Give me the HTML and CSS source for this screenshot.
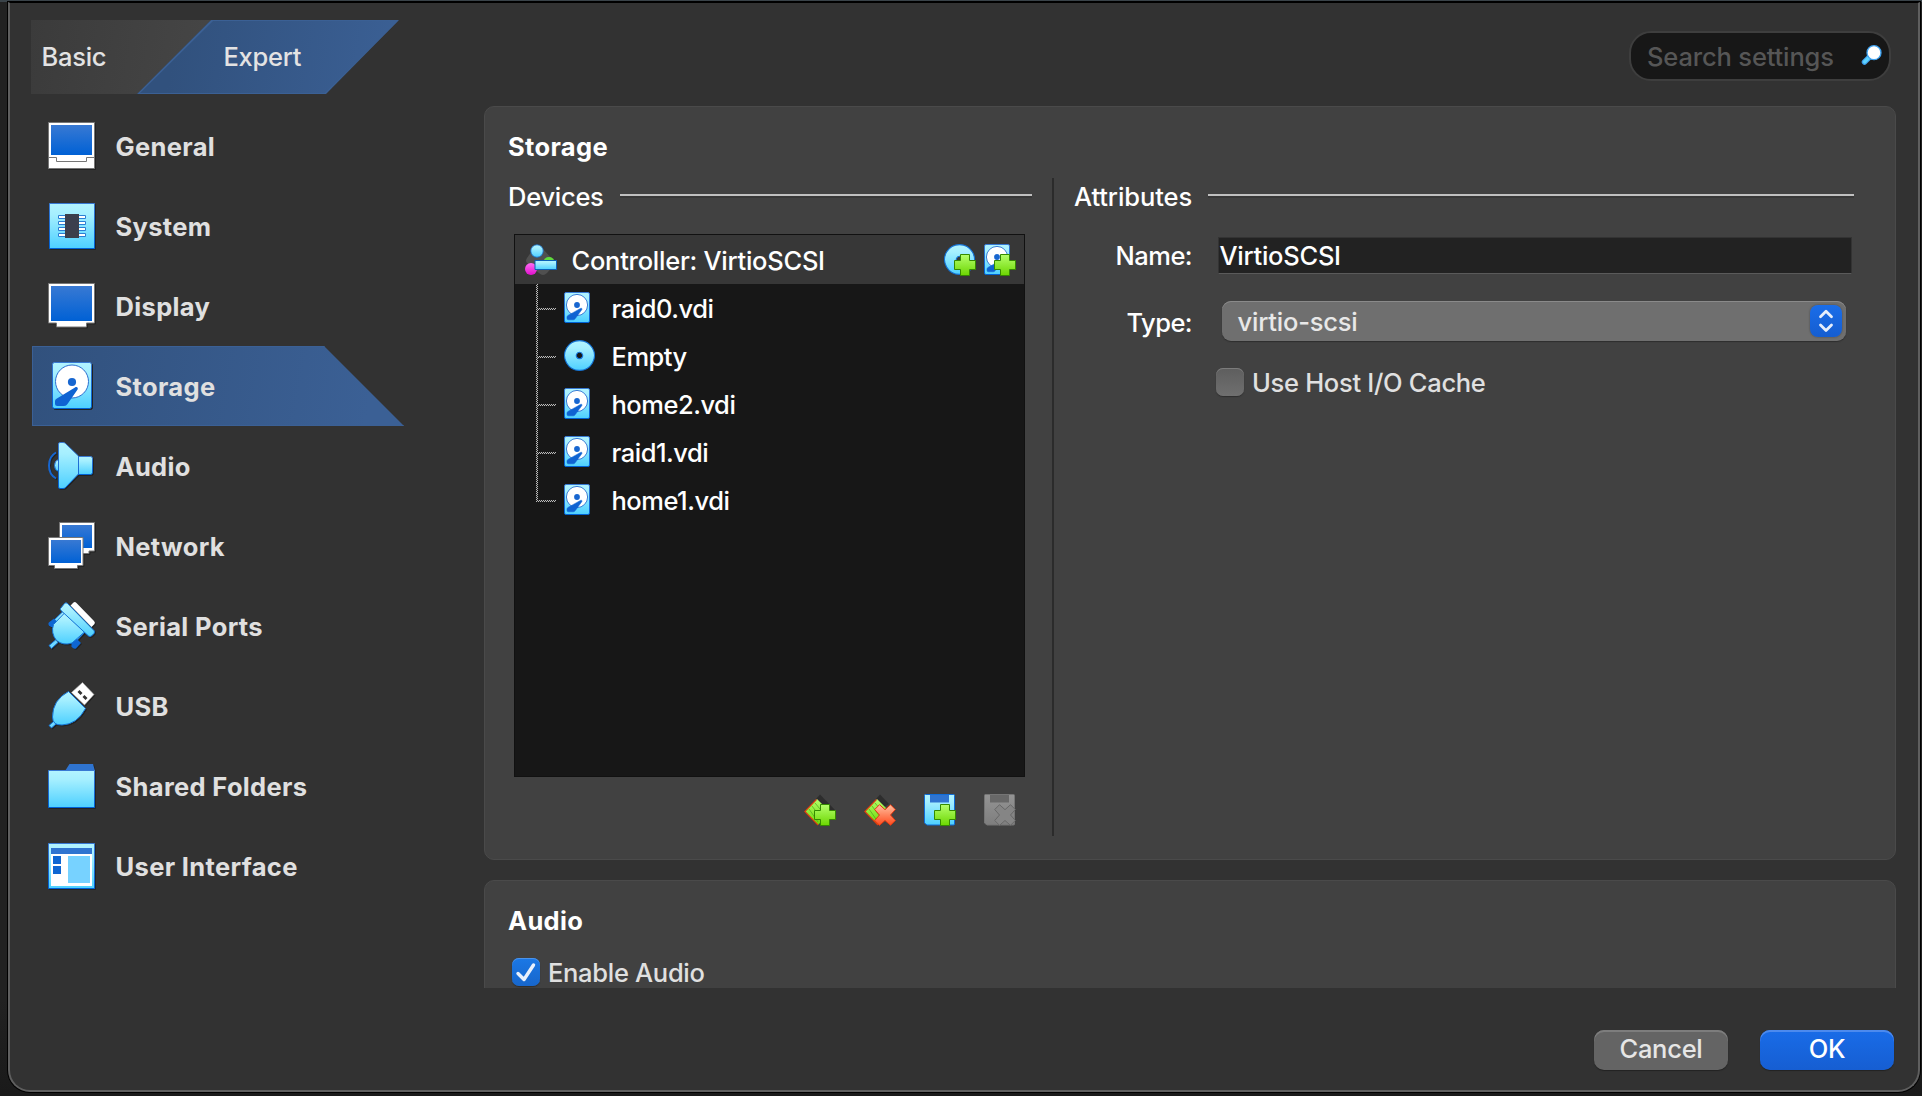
FILE: index.html
```html
<!DOCTYPE html>
<html lang="en">
<head>
<meta charset="utf-8">
<title>Settings</title>
<link rel="stylesheet" href="styles.css">
</head>
<body>
<svg class="defs" width="0" height="0" aria-hidden="true">
  <defs>
    <linearGradient id="sky" x1="0" y1="0" x2="0" y2="1"><stop offset="0" stop-color="#b3f4ff"/><stop offset=".25" stop-color="#a5efff"/><stop offset="1" stop-color="#4dd0ff"/></linearGradient>
    <linearGradient id="blue" x1="0" y1="0" x2="0" y2="1"><stop offset="0" stop-color="#3879d3"/><stop offset="1" stop-color="#0061d5"/></linearGradient>
    <linearGradient id="green" x1="0" y1="0" x2="0" y2="1"><stop offset="0" stop-color="#b4ff6c"/><stop offset="1" stop-color="#6cd600"/></linearGradient>
    <linearGradient id="red" x1="0" y1="0" x2="0" y2="1"><stop offset="0" stop-color="#ffc0a0"/><stop offset="1" stop-color="#ff4a1c"/></linearGradient>
    <linearGradient id="pink" x1="0" y1="0" x2="0" y2="1"><stop offset="0" stop-color="#ff6cf4"/><stop offset="1" stop-color="#e010cc"/></linearGradient>
    <linearGradient id="grey" x1="0" y1="0" x2="0" y2="1"><stop offset="0" stop-color="#949494"/><stop offset="1" stop-color="#7e7e7e"/></linearGradient>
    <symbol id="hd" viewBox="0 0 26 31">
      <rect x=".5" y=".5" width="25" height="30" rx="1.5" fill="url(#sky)" stroke="url(#blue)"/>
      <circle cx="13" cy="13" r="10.6" fill="#fff" stroke="#2a6fd0" stroke-width=".9"/>
      <circle cx="13" cy="13" r="2.9" fill="#1766d0"/>
      <path d="M16.5 16.4c.8-.6 1.8 0 1.400 1.200L11.3 26.6q-.9 1.200-2 1.200H4.600q-1.600 0-1.600-1.500V25q0-1 1-1.600z" fill="#0f63d2" stroke="#0f63d2" stroke-width=".5"/>
    </symbol>
    <symbol id="cd" viewBox="0 0 31 31">
      <path fill-rule="evenodd" d="M15.500 .6a14.900 14.900 0 1 0 .01 0zM15.500 12.300a3.200 3.200 0 1 1-.01 0z" fill="url(#sky)" stroke="#1372d6" stroke-width="1.100"/>
    </symbol>
    <symbol id="plus" viewBox="0 0 22 22"><path d="M6.500 .5h9v6h6v9h-6v6h-9v-6h-6v-9h6z" fill="url(#green)" stroke="#348a00"/></symbol>
    <symbol id="cross" viewBox="0 0 22 22"><path d="M5.500.7 11 5.700 16.500.7 21.300 5.500 16.500 11 21.300 16.500 16.500 21.300 11 16.500 5.500 21.300.7 16.500 5.500 11 .7 5.500z"/></symbol>
    <symbol id="floppy" viewBox="0 0 31 32"><path d="M2 .5H29.500a1 1 0 0 1 1 1V30a1 1 0 0 1-1 1H3L.5 29V1.500A1 1 0 0 1 2 .5z"/></symbol>
  </defs>
</svg>

<div class="window">
  <header class="top">
    <nav class="tabs">
      <div class="tab basic"><span class="t">Basic</span></div>
      <div class="tab expert"><span class="t">Expert</span></div>
    </nav>
    <div class="search">
      <span class="t">Search settings</span>
      <svg width="20" height="20" viewBox="0 0 20 20"><path d="M7 12.500 2.500 17" stroke="#3f9dea" stroke-width="5.500" stroke-linecap="round"/><path d="M7 12.500 2.700 16.800" stroke="#5cd3ff" stroke-width="3.500" stroke-linecap="round"/><circle cx="12" cy="7.700" r="7" fill="#fff" stroke="#3fa3f2" stroke-width="1.300"/></svg>
    </div>
  </header>

  <div class="main">
    <nav class="side">
      <div class="item"><svg width="48" height="48" viewBox="0 0 48 48"><path d="M.5.500h46v46H.5z" fill="#fff" stroke="#777"/><path d="M3 3h41v30H3z" fill="url(#blue)"/><path d="M1 35.500h7.500v4h30v-4H46" fill="none" stroke="#777"/></svg><span class="t">General</span></div>
      <div class="item"><svg width="48" height="48" viewBox="0 0 48 48"><path d="M1.500 1.500h45v45h-45z" fill="url(#sky)" stroke="url(#blue)"/><g fill="#fff" stroke="#2b7fd4"><path d="M10.500 13.500h27v3h-27zM10.500 19.500h27v3h-27zM10.500 25.500h27v3h-27zM10.500 31.500h27v3h-27z"/></g><path d="M17 12h14v24H17z" fill="#3b3f4c"/></svg><span class="t">System</span></div>
      <div class="item"><svg width="48" height="48" viewBox="0 0 48 48"><path d="M.5 1.500h46v39.500H38.500v4h-30v-4H.5z" fill="#fff" stroke="#777"/><path d="M3 4h41v35H3z" fill="url(#blue)"/></svg><span class="t">Display</span></div>
      <div class="item current"><svg width="48" height="48" viewBox="0 0 48 48"><rect x="4.500" y=".5" width="39" height="46" rx="2" fill="url(#sky)" stroke="url(#blue)"/><circle cx="24" cy="19.500" r="16.500" fill="#fff" stroke="#2a6fd0"/><circle cx="24" cy="20" r="4.100" fill="#1766d0"/><path d="M27 25.500c1.600-1.200 3.500 0 2.600 2L19.500 42q-1.200 2-3.500 2H9.500Q7 44 7 41.500V39q0-1.500 1.500-2.300z" fill="#0f63d2"/></svg><span class="t">Storage</span></div>
      <div class="item"><svg width="48" height="48" viewBox="0 0 48 48"><path d="M8 10.500q-7 4-7 13t7 13" fill="none" stroke="#1766d0" stroke-width="2"/><path d="M10.500 17.500q-4 1-4 6t4 6z" fill="url(#sky)" stroke="url(#blue)"/><path d="M30.500 14.500h12q2 0 2 2v14q0 2-2 2h-12z" fill="url(#sky)" stroke="url(#blue)"/><path d="M10.500 2q0-1.500 1.500-1.500h3q1.500 0 2.500 1l13 12.500v18l-13 13.500q-1 1-2.500 1h-3q-1.500 0-1.500-1.500z" fill="url(#sky)" stroke="url(#blue)"/></svg><span class="t">Audio</span></div>
      <div class="item"><svg width="48" height="48" viewBox="0 0 48 48"><path d="M11.500.500h35v28.500h-5.500v2.500h-23v-2.500h-6.500z" fill="#fff" stroke="#777"/><path d="M14 3h30v23H14z" fill="url(#blue)"/><path d="M.5 15.500h34.500v28h-5.500v3h-23v-3h-6z" fill="#fff" stroke="#777"/><path d="M3 18h30v23H3z" fill="url(#blue)"/></svg><span class="t">Network</span></div>
      <div class="item"><svg width="48" height="48" viewBox="0 0 48 48"><path d="M22.500 3.500 25.500.500q1.500-1 3 .5L46 19q1.500 1.500.5 3l-3 3z" fill="#fff"/><path d="M17 7.500 4.500 19.500l5 5L22 12.500z" fill="url(#sky)" stroke="#1372d6"/><path d="M6 16.500.8 20.500q-1 1.500.2 3l2 1.500h3L11 21.500z" fill="#0e66d2"/><path d="M38.500 28.500 26.500 41l-3-5L34 25z" fill="url(#sky)" stroke="#1372d6"/><path d="M28.500 36.500 23.500 41v3.500q2 3 4.500 2L33 41z" fill="#0e66d2"/><path d="M7.500 38 1 43.500l2.500 3L10 40.500" fill="#6fd8ff" stroke="#1372d6"/><path d="M17 10.500 36.500 30 24 41Q15.500 44 8.500 38.500 2.500 31 5.500 22.500z" fill="url(#sky)" stroke="#1372d6"/><path d="m12.500 6.500 4-5q1.500-1.500 3 0L46 28.500q1 1.500 0 3l-2.500 2.500q-1.500 1-3 0L13 8.500q-1-1-.5-2z" fill="url(#sky)" stroke="#1372d6"/></svg><span class="t">Serial Ports</span></div>
      <div class="item"><svg width="48" height="48" viewBox="0 0 48 48"><path d="M34.500.500 46 12.500 36.500 23 23.500 10.500z" fill="#fff" stroke="#aaa" stroke-width=".6"/><path d="m31.500 8 3 3-2 2-3-3zM36.500 13l3 3-2 2-3-3z" fill="#333"/><path d="M5.500 39.500 1 43.500l2.500 2.500L8 42" fill="#6fd8ff" stroke="#1372d6"/><path d="M20.500 9.500 37.500 26.500Q29 42.500 14 43q-4.500 0-7-1.500-2.500-2.500-2.500-6.500Q4.500 18 20.500 9.500z" fill="url(#sky)" stroke="#1372d6"/></svg><span class="t">USB</span></div>
      <div class="item"><svg width="48" height="48" viewBox="0 0 48 48"><path d="m17 9 4.500-7H45l2 7z" fill="#2f74d0"/><path d="M.5 8.500h46v37H.5z" fill="url(#sky)" stroke="url(#blue)"/></svg><span class="t">Shared Folders</span></div>
      <div class="item"><svg width="48" height="48" viewBox="0 0 48 48"><path d="M.5 1.500h46v45H.5z" fill="url(#sky)" stroke="url(#blue)"/><path d="M3 6h41v38H3z" fill="#fff"/><path d="M3 6h41v6H3z" fill="#2f74d0"/><path d="M5 14h8v8H5zM5 24h8v8H5z" fill="#0e66d2"/><path d="M20 14h22v27H20z" fill="#77d2ff"/></svg><span class="t">User Interface</span></div>
    </nav>

    <div class="content">
      <section class="panel storage">
        <h2><span class="t">Storage</span></h2>
        <div class="split">
          <div class="devices">
            <div class="legend"><span class="t">Devices</span><i></i></div>
            <div class="tree">
              <div class="controller">
                <svg width="32" height="32" viewBox="0 0 32 32"><path d="M11 1 17 4 31 19 22 29q-4 4-8 0L2 19q-2-2 0-5z" fill="#505050"/><ellipse cx="24" cy="18" rx="5.500" ry="5" fill="#5fdc3c"/><circle cx="6" cy="25" r="6" fill="url(#pink)"/><circle cx="12" cy="7" r="6.200" fill="url(#sky)" stroke="#1372d6" stroke-width=".8"/><path d="M10 16.500h21.500v9H10z" fill="url(#sky)" stroke="#0b5fb8"/></svg>
                <span class="t grow">Controller: VirtioSCSI</span>
                <svg width="32" height="32" viewBox="0 0 32 32"><use href="#cd" width="31" height="31"/><use href="#plus" x="10" y="10" width="22" height="22"/></svg>
                <svg width="32" height="32" viewBox="0 0 32 32"><use href="#hd" width="26" height="31"/><use href="#plus" x="10" y="10" width="22" height="22"/></svg>
              </div>
              <div class="row"><svg width="31" height="31"><use href="#hd" width="26" height="31"/></svg><span class="t">raid0.vdi</span></div>
              <div class="row"><svg width="31" height="31"><use href="#cd" width="31" height="31"/></svg><span class="t">Empty</span></div>
              <div class="row"><svg width="31" height="31"><use href="#hd" width="26" height="31"/></svg><span class="t">home2.vdi</span></div>
              <div class="row"><svg width="31" height="31"><use href="#hd" width="26" height="31"/></svg><span class="t">raid1.vdi</span></div>
              <div class="row last"><svg width="31" height="31"><use href="#hd" width="26" height="31"/></svg><span class="t">home1.vdi</span></div>
            </div>
            <div class="tools">
              <svg width="32" height="32" viewBox="0 0 32 32"><path d="M12 5 16 .5 31 16V18H24z" fill="#2d2d2d"/><path d="M1 17.500 13 5 26 18 14 31z" fill="url(#green)"/><path d="m5 15 9 13M8 12l9 12M11 9l10 12" stroke="#4ca51c" stroke-width=".7"/><path d="M14 31 .8 17.500 12.500 5.500" fill="none" stroke="#e03a10" stroke-width="1.100"/><use href="#plus" x="10" y="10" width="22" height="22"/></svg>
              <svg width="32" height="32" viewBox="0 0 32 32"><path d="M12 5 16 .5 25 10 20 13z" fill="#2d2d2d"/><path d="M1 17.500 13 5 22 14 14 31z" fill="url(#green)"/><path d="m5 15 9 13M8 12l9 12M11 9l10 12" stroke="#4ca51c" stroke-width=".7"/><path d="M14 31 .8 17.500 12.500 5.500" fill="none" stroke="#e03a10" stroke-width="1.100"/><use href="#cross" x="10" y="10" width="22" height="22" fill="url(#red)" stroke="#e83a12"/></svg>
              <svg width="32" height="32" viewBox="0 0 32 32"><use href="#floppy" width="31" height="32" fill="url(#sky)" stroke="#0f6cd8"/><path d="M6 1h19v7.500H6z" fill="#2f74d0"/><use href="#plus" x="10" y="10" width="22" height="22"/></svg>
              <svg width="32" height="32" viewBox="0 0 32 32"><use href="#floppy" width="31" height="32" fill="url(#grey)" stroke="#757575"/><path d="M6 1h19v7.500H6z" fill="#686868"/><use href="#cross" x="10" y="10" width="22" height="22" fill="#858585" stroke="#686868"/></svg>
            </div>
          </div>
          <div class="attributes">
            <div class="legend"><span class="t">Attributes</span><i></i></div>
            <div class="form">
              <label class="name-label"><span class="t">Name:</span></label>
              <div class="field"><span class="t">VirtioSCSI</span></div>
              <label class="type-label"><span class="t">Type:</span></label>
              <div class="select"><span class="t">virtio-scsi</span><b><svg width="32" height="32" viewBox="0 0 32 32" fill="none" stroke="#e6eefb" stroke-width="2.800" stroke-linecap="round" stroke-linejoin="round"><path d="m10.500 11.800 5.500-5.500 5.500 5.500M10.500 20l5.500 5.500 5.500-5.500"/></svg></b></div>
              <div class="check cache"><span class="box"></span><span class="t">Use Host I/O Cache</span></div>
            </div>
          </div>
        </div>
      </section>
      <section class="panel audio">
        <h2><span class="t">Audio</span></h2>
        <div class="check"><span class="box on"><svg width="28" height="28" viewBox="0 0 28 28" fill="none" stroke="#e8f0fc" stroke-width="3.400" stroke-linecap="round" stroke-linejoin="round"><path d="m6 15.500 6 6L21.500 7"/></svg></span><span class="t">Enable Audio</span></div>
      </section>
    </div>
  </div>

  <footer class="buttons">
    <div class="button"><span class="t">Cancel</span></div>
    <div class="button primary"><span class="t">OK</span></div>
  </footer>
</div>
</body>
</html>
```
FILE: styles.css
```css
* { box-sizing: border-box; }

body {
  margin: 0;
  height: 1096px;
  overflow: hidden;
  padding: 2px 2px 4px 8px;
  background: linear-gradient(#3a4349 0 2px, #222 2px 1000px, #1a1a1a 1092px);
  font: 450 25.500px/30px Inter, "Liberation Sans", sans-serif;
  letter-spacing: -.26px;
  color: #fff;
}

svg { display: block; flex: none; overflow: visible; }
.defs { position: absolute; }
.t { white-space: nowrap; }

.window {
  display: flex;
  flex-direction: column;
  height: 1090px;
  border: 2px solid #5f5f5f;
  border-top: 1px solid #000;
  border-radius: 0 0 22px 22px;
  background: #323232;
  box-shadow: 0 0 0 1px #000;
}

.top {
  display: flex;
  justify-content: space-between;
  height: 103px;
  padding: 17px 27px 0 21px;
}
.tabs { display: flex; height: 74px; color: #e3e3e3; }
.tab { display: flex; align-items: center; height: 74px; }
.basic {
  width: 180px;
  padding-left: 10.500px;
  background: linear-gradient(100deg, #3b3b3b, #464646);
  clip-path: polygon(0 0, 100% 0, 106px 100%, 0 100%);
}
.expert {
  position: relative;
  width: 262px;
  margin-left: -74px;
  padding-left: 86.500px;
  background: #3b6094;
  clip-path: polygon(74px 0, 100% 0, 189px 100%, 0 100%);
}
.expert::before {
  content: "";
  position: absolute;
  inset: 1px;
  background: linear-gradient(100deg, #31517d 15%, #3b6095);
  clip-path: polygon(75px 0, 100% 0, 187px 100%, 2px 100%);
}
.expert .t { position: relative; }
.search {
  display: flex;
  align-items: center;
  justify-content: space-between;
  width: 262px;
  height: 50px;
  margin-top: 11px;
  padding: 0 7px 0 16px;
  border: 2px solid #3e3e3e;
  border-radius: 22px;
  background: #171717;
  color: #565656;
}
.search .t { padding-top: 1px; letter-spacing: -.15px; }
.search svg { margin-top: -3px; }

.main { display: flex; height: 882px; }
.side { width: 474px; padding-left: 22px; font-weight: 700; letter-spacing: .34px; color: #e0e0e0; }
.item {
  display: flex;
  align-items: center;
  gap: 19.500px;
  width: 372px;
  height: 80px;
  padding-left: 16px;
}
.item svg { filter: drop-shadow(1px 1px 0 #222); }
.item .t { padding-top: 1px; }
.current {
  background: linear-gradient(#3b6095 0 0) top/100% 1px no-repeat,
    linear-gradient(#3b6095 0 0) bottom/100% 1px no-repeat,
    linear-gradient(#3b6095 0 0) left/1px 100% no-repeat,
    linear-gradient(100deg, #31517d, #3b6095 90%);
  clip-path: polygon(0 0, 292px 0, 100% 100%, 0 100%);
}

.content { display: flex; flex-direction: column; gap: 20px; width: 1412px; overflow: hidden; }
.panel {
  flex: none;
  border: 1px solid #4a4a4a;
  border-radius: 10px;
  background: #414141;
  padding: 25px 41px 0 23px;
}
.storage { height: 754px; }
.audio { height: 200px; }
h2 { margin: 0; font: inherit; font-weight: 700; letter-spacing: .34px; }

.split { display: flex; margin-top: 16px; height: 658px; }
.devices { width: 546px; border-right: 2px solid #2b2b2b; padding-right: 20px; }
.attributes { flex: 1; padding-left: 20px; }
.legend { display: flex; height: 56px; padding-top: 4px; }
.legend .t { width: 112px; }
.legend i { flex: 1; height: 4px; margin-top: 12px; background: linear-gradient(#c0c0c0 0 2px, #373737 2px); }
.attributes .legend .t { width: 134px; letter-spacing: -.1px; }

.tree { width: 511px; height: 543px; margin-left: 6px; border: 1px solid #111; background: #171717; }
.controller {
  display: flex;
  align-items: center;
  gap: 8px;
  height: 49px;
  padding: 0 8px 0 10px;
  background: #373737;
}
.controller .grow { flex: 1; padding: 2px 0 0 6.500px; }
.row {
  position: relative;
  display: flex;
  align-items: center;
  gap: 16.500px;
  height: 48px;
  padding-left: 49px;
  letter-spacing: -.48px;
}
.row svg { margin-top: -1px; }
.row .t { padding-top: 2px; }
.row::before {
  content: "";
  position: absolute;
  left: 21px;
  top: 0;
  width: 2px;
  height: 100%;
  background: repeating-conic-gradient(#bbb 0 25%, #222 0 50%) 0 0/2px 2px;
}
.row::after {
  content: "";
  position: absolute;
  left: 23px;
  top: 24px;
  width: 18px;
  height: 2px;
  background: repeating-conic-gradient(#bbb 0 25%, #222 0 50%) 0 0/2px 2px;
}
.last::before { height: 26px; }
.tools { display: flex; justify-content: flex-end; gap: 28px; padding: 17px 16px 0 0; }

.form {
  display: grid;
  grid-template-columns: 117px 636px;
  column-gap: 25px;
  grid-template-rows: 37px 40px 28px;
  row-gap: 27px;
  padding-top: 3px;
}
.form label { display: flex; align-items: center; justify-content: flex-end; letter-spacing: -.55px; }
.form label .t { margin-right: -1px; }
.type-label { padding-top: 3px; }
.field {
  width: 634px;
  margin-left: 2px;
  display: flex;
  align-items: center;
  padding-left: .5px;
  border: 1px solid #333;
  border-bottom-color: #5a5a5a;
  background: #222;
}
.select {
  display: flex;
  align-items: center;
  justify-content: space-between;
  width: 624px;
  margin-left: 6px;
  padding: 0 4px 0 15.500px;
  border-radius: 9px;
  background: #6f6f6f;
  box-shadow: inset 0 1px #8a8a8a, 0 1px 1px #2e2e2e;
  color: #e8e8e8;
}
.select .t { padding-top: 1px; letter-spacing: -.2px; }
.select b { border-radius: 8px; background: linear-gradient(#1a6de9, #155dd0); box-shadow: 0 0 2px #444; }
.check { display: flex; align-items: center; gap: 8px; height: 28px; letter-spacing: -.3px; color: #e0e0e0; }
.cache { grid-column: 2; }
.check .t { padding-top: 1px; }
.box {
  width: 28px;
  height: 28px;
  border-radius: 7px;
  background: linear-gradient(#5e5e5e, #6f6f6f);
  box-shadow: inset 0 1px #7c7c7c, 0 1px 1px #2e2e2e;
}
.on { background: linear-gradient(#1b78e6, #1766cb); box-shadow: inset 0 1px #4b93ea, 0 1px 1px #2e2e2e; }
.audio .check { margin: 22px 0 0 4px; }

.buttons { display: flex; justify-content: flex-end; gap: 32px; padding: 42px 24px 0 0; }
.button {
  display: flex;
  align-items: center;
  justify-content: center;
  width: 134px;
  height: 40px;
  padding-bottom: 2px;
  border-radius: 10px;
  background: #646464;
  box-shadow: inset 0 2px #7d7d7d, 0 1px 1px #222;
  color: #e6e6e6;
}
.primary { background: linear-gradient(#196ce8, #165ed2); box-shadow: inset 0 2px #4c8aee, 0 1px 1px #222; color: #fff; }
```
